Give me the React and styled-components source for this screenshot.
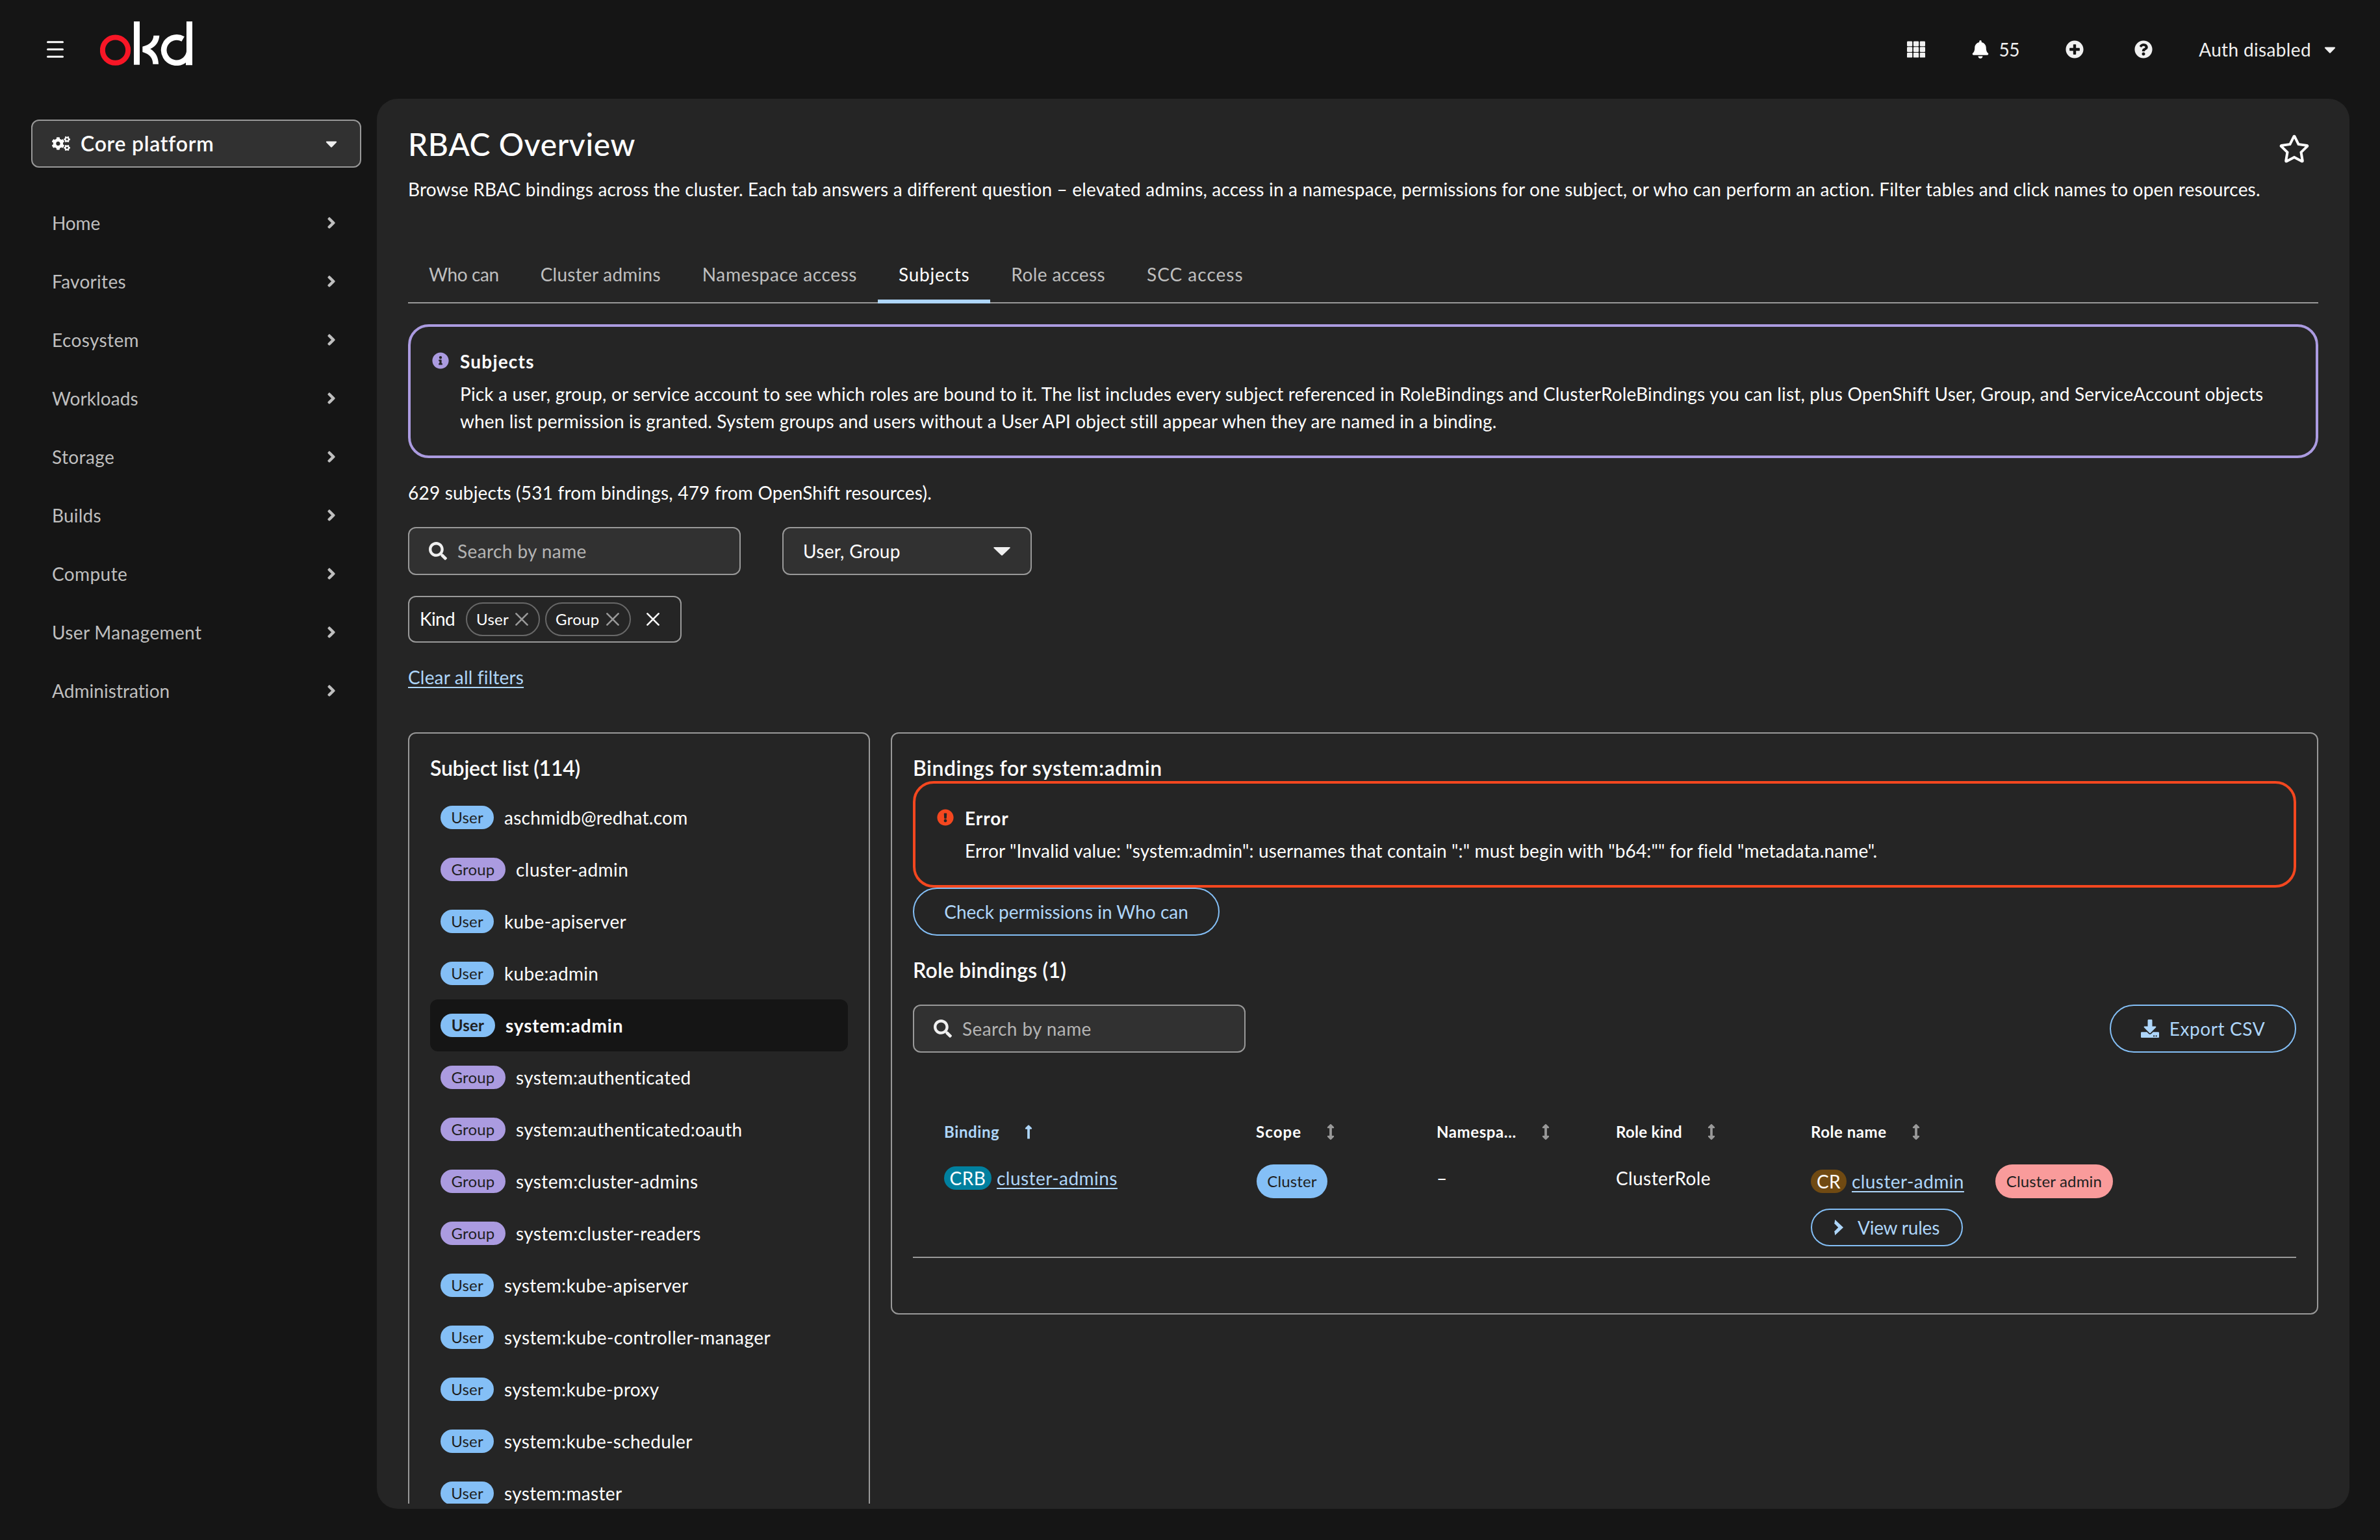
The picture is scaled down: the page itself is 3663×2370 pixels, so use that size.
import React from 'react'
import styled, { createGlobalStyle, css } from 'styled-components'
import {
  FaAngleRight,
  FaArrowsAltV,
  FaBell,
  FaCaretDown,
  FaCogs,
  FaDownload,
  FaExclamationCircle,
  FaInfoCircle,
  FaLongArrowAltUp,
  FaPlusCircle,
  FaQuestionCircle,
  FaRegStar,
  FaSearch,
} from 'react-icons/fa'

const GlobalStyle = createGlobalStyle`
* {
  box-sizing: border-box;
}
body {
  margin: 0;
  background: #151515;
  color: #ffffff;
  font-family: Lato, 'Liberation Sans', sans-serif;
  font-size: 28px;
  line-height: 42px;
}
svg {
  display: block;
  flex: none;
}
`

const spacing = css`
  letter-spacing: ${(p) => p.$ls || 0}px;
`

const Page = styled.div`
  width: 3663px;
  height: 2370px;
  overflow: hidden;
`
const Masthead = styled.header`
  height: 152px;
  padding: 0 63px 0 72px;
  display: flex;
  align-items: center;
`
const MenuButton = styled.div`
  width: 26px;
  margin-right: 56px;
`
const Logo = styled.div`
  width: 142px;
  height: 68px;
  margin-bottom: 19px;
`
const Tools = styled.div`
  margin-left: auto;
  display: flex;
  align-items: center;
  color: #f0f0f0;
`
const Tool = styled.div`
  display: flex;
  align-items: center;
  gap: 15px;
  margin-right: ${(p) => p.$after || 0}px;
  white-space: nowrap;
  ${spacing}
`
const Body = styled.div`
  display: flex;
`
const Sidebar = styled.nav`
  width: 580px;
  padding: 32px 24px 0 48px;
`
const Perspective = styled.div`
  height: 74px;
  border: 2px solid #999999;
  border-radius: 12px;
  background: #313131;
  padding: 0 30px;
  margin-bottom: 40px;
  display: flex;
  align-items: center;
  gap: 16px;
  font-size: 32px;
  font-weight: 600;
  letter-spacing: 0.7px;
  & > svg {
    font-size: 28px;
  }
  & > svg:last-child {
    margin-left: auto;
    color: #f0f0f0;
  }
`
const NavItem = styled.div`
  height: 90px;
  padding: 0 32px;
  display: flex;
  align-items: center;
  justify-content: space-between;
  color: #bfbfbf;
  ${spacing}
`
const Main = styled.main`
  width: 3036px;
  height: 2170px;
  padding-bottom: 8px;
  background: #252525;
  border-radius: 32px;
`
const Scroll = styled.div`
  height: 2162px;
  overflow: hidden;
  padding: 39px 48px 0;
`
const TitleRow = styled.div`
  display: flex;
  justify-content: space-between;
  height: 62px;
  padding-right: 13px;
  & > svg {
    font-size: 48px;
    margin-top: 14px;
  }
`
const Title = styled.h1`
  margin: 0;
  font-size: 48px;
  line-height: 62px;
  font-weight: 500;
  letter-spacing: 0.6px;
`
const Line = styled.div`
  height: 42px;
  margin-top: ${(p) => p.$top || 0}px;
  white-space: nowrap;
  ${spacing}
`
const Tabs = styled.div`
  display: flex;
  height: 87px;
  margin: 68px 0 32px;
  border-bottom: 2px solid #999999;
`
const Tab = styled.div`
  height: 87px;
  padding: 21px 32px 0;
  color: ${(p) => (p.$active ? '#ffffff' : '#bfbfbf')};
  border-bottom: 6px solid ${(p) => (p.$active ? '#aed6fa' : 'transparent')};
  white-space: nowrap;
  ${spacing}
`
const Alert = styled.div`
  border: 4px solid ${(p) => p.$color};
  border-radius: 32px;
  padding: 32px 33px;
  display: flex;
  gap: 17px;
  & > svg {
    font-size: 26px;
    margin-top: 7px;
    color: ${(p) => p.$color};
  }
`
const AlertTitle = styled.div`
  font-weight: 700;
  margin-bottom: 8px;
  ${spacing}
`
const Filters = styled.div`
  display: flex;
  gap: 64px;
  margin: 32px 0;
`
const SearchBox = styled.div`
  width: 512px;
  height: 74px;
  border: 2px solid #999999;
  border-radius: 12px;
  background: #313131;
  padding-left: 30px;
  display: flex;
  align-items: center;
  gap: 16px;
  color: #b4b4b4;
  letter-spacing: 0.4px;
  & > svg {
    color: #f0f0f0;
  }
`
const Select = styled.div`
  width: 384px;
  height: 74px;
  border: 2px solid #999999;
  border-radius: 12px;
  background: #313131;
  padding: 0 31px 0 30px;
  display: flex;
  align-items: center;
  justify-content: space-between;
  letter-spacing: 0.3px;
`
const ChipGroup = styled.div`
  width: 421px;
  height: 72px;
  border: 2px solid #999999;
  border-radius: 12px;
  padding: 0 32px 0 16px;
  display: flex;
  align-items: center;
  gap: 8px;
  & > svg:last-child {
    margin-left: auto;
  }
`
const ChipLabel = styled.div`
  width: 63px;
  margin-top: -3px;
  letter-spacing: -0.6px;
`
const Chip = styled.div`
  width: ${(p) => p.$width}px;
  height: 52px;
  border: 2px solid #686868;
  border-radius: 26px;
  padding: 0 16px 0 14px;
  display: flex;
  align-items: center;
  justify-content: space-between;
  font-size: 24px;
  letter-spacing: 0.3px;
`
const Link = styled.a`
  color: #aed6fa;
  text-decoration: underline;
  text-decoration-thickness: 2px;
  text-underline-offset: 4px;
  white-space: nowrap;
  ${spacing}
`
const Columns = styled.div`
  display: flex;
  align-items: flex-start;
  gap: 32px;
  margin-top: 64px;
`
const Panel = styled.section`
  width: ${(p) => p.$width}px;
  border: 2px solid #999999;
  border-radius: 12px;
  padding: 32px 32px ${(p) => p.$bottom}px;
`
const PanelTitle = styled.h2`
  margin: 0;
  font-size: 32px;
  line-height: 41px;
  font-weight: 600;
  white-space: nowrap;
  ${spacing}
`
const List = styled.div`
  margin-top: 16px;
  height: 1400px;
`
const Subject = styled.div`
  height: 80px;
  padding: 0 16px;
  display: flex;
  align-items: center;
  gap: 16px;
  border-radius: 12px;
  background: ${(p) => (p.$selected ? '#151515' : 'transparent')};
  font-weight: ${(p) => (p.$selected ? 700 : 400)};
  ${spacing}
`
const KindBadge = styled.span`
  height: 36px;
  width: ${(p) => p.$width}px;
  border-radius: 18px;
  background: ${(p) => (p.$group ? '#ab9be0' : '#84bff6')};
  color: #1f1f1f;
  font-size: 24px;
  line-height: 35px;
  text-align: center;
  letter-spacing: 0.2px;
`
const Button = styled.div`
  height: ${(p) => (p.$small ? 58 : 74)}px;
  width: ${(p) => p.$width}px;
  border: 2px solid #84bff6;
  border-radius: 37px;
  color: #aed6fa;
  display: flex;
  align-items: center;
  justify-content: center;
  gap: ${(p) => (p.$small ? 22 : 16)}px;
  white-space: nowrap;
  ${spacing}
`
const SectionTitle = styled(PanelTitle)`
  margin: 32px 0 33px;
`
const TableTools = styled.div`
  display: flex;
  justify-content: space-between;
  margin-bottom: 81px;
`
const TableRow = styled.div`
  display: grid;
  grid-template-columns: 480px 278px 276px 300px 1fr;
  padding-left: 48px;
`
const HeadRow = styled(TableRow)`
  height: 82px;
  align-items: center;
  font-size: 24px;
  font-weight: 700;
`
const DataRow = styled(TableRow)`
  padding-top: 9px;
  padding-bottom: 16px;
  border-bottom: 2px solid #999999;
`
const HeadCell = styled.div`
  display: flex;
  align-items: center;
  gap: 33px;
  color: ${(p) => (p.$sorted ? '#aed6fa' : '#ffffff')};
  ${spacing}
  & > svg {
    color: ${(p) => (p.$sorted ? '#aed6fa' : '#999999')};
  }
`
const Cell = styled.div`
  letter-spacing: 0.4px;
`
const Resource = styled.div`
  display: flex;
  align-items: center;
  height: ${(p) => p.$height}px;
`
const ResourceBadge = styled.span`
  width: ${(p) => p.$width}px;
  height: 36px;
  margin-right: 8px;
  border-radius: 18px;
  background: ${(p) => p.$color};
  line-height: 36px;
  text-align: center;
  ${spacing}
`
const Label = styled.span`
  display: inline-block;
  width: ${(p) => p.$width}px;
  height: 52px;
  margin-left: ${(p) => p.$left || 0}px;
  border-radius: 26px;
  background: ${(p) => p.$color};
  color: #1f1f1f;
  font-size: 24px;
  line-height: 51px;
  text-align: center;
  letter-spacing: 0.15px;
`
const Rules = styled.div`
  margin-top: 16px;
`

const navItems = [
  ['Home', -0.1],
  ['Favorites', 0.3],
  ['Ecosystem', 0.4],
  ['Workloads', 0.1],
  ['Storage', 0.4],
  ['Builds', 0.2],
  ['Compute', 0.4],
  ['User Management', 0.35],
  ['Administration', 0.05],
]

const tabs = [
  ['Who can', -0.4],
  ['Cluster admins', 0.25],
  ['Namespace access', 0.6],
  ['Subjects', 0.75],
  ['Role access', 0.4],
  ['SCC access', 1],
]

const subjects = [
  ['User', 'aschmidb@redhat.com', 0.25],
  ['Group', 'cluster-admin', 0.45],
  ['User', 'kube-apiserver', 0.35],
  ['User', 'kube:admin', 0.3],
  ['User', 'system:admin', 0.85],
  ['Group', 'system:authenticated', 0.35],
  ['Group', 'system:authenticated:oauth', 0.3],
  ['Group', 'system:cluster-admins', 0.38],
  ['Group', 'system:cluster-readers', 0.38],
  ['User', 'system:kube-apiserver', 0.35],
  ['User', 'system:kube-controller-manager', 0.42],
  ['User', 'system:kube-proxy', 0.35],
  ['User', 'system:kube-scheduler', 0.35],
  ['User', 'system:master', 0.35],
]

const headers = [
  ['Binding', 0.6],
  ['Scope', 1.1],
  ['Namespa...', 0.6],
  ['Role kind', 0.3],
  ['Role name', 0.55],
]

const HamburgerIcon = () => (
  <svg width="26" height="26" viewBox="0 0 26 26" stroke="#fff" strokeWidth="3" strokeLinecap="round">
    <path d="M1.5 1.7h23M1.5 13h23M1.5 24.3h23" />
  </svg>
)

const OkdLogo = () => (
  <svg width="142" height="68" viewBox="282 37 426 204" fill="none">
    <circle cx="352.5" cy="169.5" r="59" stroke="#f81626" strokeWidth="24" />
    <path fill="#fff" d="M438 37h27v200h-27z" />
    <path
      fill="#fff"
      d="M529 102h27c-2 27-14 48-42 62 26 16 37 39 38 70h-26c0-26-14-46-48-56v-25c33-8 50-26 51-51z"
    />
    <path stroke="#fff" strokeWidth="26" d="M665 118a59 59 0 1 0 29.5 50.5" />
    <path fill="#fff" d="M681 37h27v202h-30v-30l3-20z" />
  </svg>
)

const GridIcon = () => (
  <svg width="28" height="28" viewBox="0 0 28 28" fill="currentColor">
    {[1.6, 10.3, 19].map((y) =>
      [0, 9.9, 19.8].map((x) => <rect key={`${x}-${y}`} x={x} y={y} width="8.2" height="7.6" rx="1.2" />)
    )}
  </svg>
)

const CrossIcon = ({ color }) => (
  <svg width="20" height="20" viewBox="0 0 20 20" stroke={color} strokeWidth="2.6" strokeLinecap="round">
    <path d="M1.4 1.4l17.2 17.2M18.6 1.4L1.4 18.6" />
  </svg>
)

const SelectCaret = () => (
  <svg width="26" height="13" viewBox="0 0 26 13" fill="#f0f0f0">
    <path d="M1 0h24l1 1-12 11.5q-1 .8-2 0L0 1z" />
  </svg>
)

// heavier than the plain angle, with pointed ends
const RulesChevron = () => (
  <svg width="14" height="24" viewBox="0 0 14 24" fill="currentColor">
    <path d="M1.2 0L14 12 1.2 24l-.6-4.4L0 18.2 6.2 12 0 5.8l.6-1.4z" />
  </svg>
)

const App = () => {
  return (
    <Page>
      <GlobalStyle />
      <Masthead>
        <MenuButton><HamburgerIcon /></MenuButton>
        <Logo><OkdLogo /></Logo>
        <Tools>
          <Tool $after={71}><GridIcon /></Tool>
          <Tool $after={71} $ls={-0.4}><FaBell color="#fff" />55</Tool>
          <Tool $after={78}><FaPlusCircle /></Tool>
          <Tool $after={71}><FaQuestionCircle /></Tool>
          <Tool $ls={0.35}>Auth disabled<FaCaretDown /></Tool>
        </Tools>
      </Masthead>
      <Body>
        <Sidebar>
          <Perspective><FaCogs />Core platform<FaCaretDown /></Perspective>
          {navItems.map(([name, ls]) => (
            <NavItem key={name} $ls={ls}>{name}<FaAngleRight /></NavItem>
          ))}
        </Sidebar>
        <Main>
          <Scroll>
            <TitleRow>
              <Title>RBAC Overview</Title>
              <FaRegStar />
            </TitleRow>
            <Line $top={17} $ls={0.18}>
              Browse RBAC bindings across the cluster. Each tab answers a different question – elevated admins, access in a namespace, permissions for one subject, or who can perform an action. Filter tables and click names to open resources.
            </Line>
            <Tabs>
              {tabs.map(([name, ls]) => (
                <Tab key={name} $ls={ls} $active={name === 'Subjects'}>{name}</Tab>
              ))}
            </Tabs>
            <Alert $color="#ab9be0">
              <FaInfoCircle />
              <div>
                <AlertTitle $ls={1.2}>Subjects</AlertTitle>
                <Line $ls={0.18}>
                  Pick a user, group, or service account to see which roles are bound to it. The list includes every subject referenced in RoleBindings and ClusterRoleBindings you can list, plus OpenShift User, Group, and ServiceAccount objects
                </Line>
                <Line $ls={0.1}>
                  when list permission is granted. System groups and users without a User API object still appear when they are named in a binding.
                </Line>
              </div>
            </Alert>
            <Line $top={32} $ls={0.2}>629 subjects (531 from bindings, 479 from OpenShift resources).</Line>
            <Filters>
              <SearchBox><FaSearch />Search by name</SearchBox>
              <Select>User, Group<SelectCaret /></Select>
            </Filters>
            <ChipGroup>
              <ChipLabel>Kind</ChipLabel>
              <Chip $width={114}>User<CrossIcon color="#999" /></Chip>
              <Chip $width={132}>Group<CrossIcon color="#999" /></Chip>
              <CrossIcon color="#fff" />
            </ChipGroup>
            <Line $top={32}><Link $ls={0.17}>Clear all filters</Link></Line>
            <Columns>
              <Panel $width={711} $bottom={32}>
                <PanelTitle $ls={-0.25}>Subject list (114)</PanelTitle>
                <List>
                  {subjects.map(([kind, name, ls]) => {
                    const selected = name === 'system:admin'
                    return (
                      <Subject key={name} $selected={selected} $ls={ls}>
                        <KindBadge $group={kind === 'Group'} $width={kind === 'Group' ? 100 : selected ? 84 : 82}>{kind}</KindBadge>
                        {name}
                      </Subject>
                    )
                  })}
                </List>
              </Panel>
              <Panel $width={2197} $bottom={85}>
                <PanelTitle $ls={0.5}>Bindings for system:admin</PanelTitle>
                <Alert $color="#f4471f">
                  <FaExclamationCircle />
                  <div>
                    <AlertTitle $ls={1}>Error</AlertTitle>
                    <Line $ls={0.14}>
                      Error "Invalid value: "system:admin": usernames that contain ":" must begin with "b64:"" for field "metadata.name".
                    </Line>
                  </div>
                </Alert>
                <Button $width={472}>Check permissions in Who can</Button>
                <SectionTitle $ls={0.2}>Role bindings (1)</SectionTitle>
                <TableTools>
                  <SearchBox><FaSearch />Search by name</SearchBox>
                  <Button $width={287} $ls={0.6}><FaDownload />Export CSV</Button>
                </TableTools>
                <HeadRow>
                  {headers.map(([name, ls], i) => (
                    <HeadCell key={name} $ls={ls} $sorted={i === 0}>
                      {name}
                      {i === 0 ? <FaLongArrowAltUp /> : <FaArrowsAltV />}
                    </HeadCell>
                  ))}
                </HeadRow>
                <DataRow>
                  <Cell>
                    <Resource $height={42}>
                      <ResourceBadge $width={73} $color="#00809f" $ls={0.6}>CRB</ResourceBadge>
                      <Link $ls={0.45}>cluster-admins</Link>
                    </Resource>
                  </Cell>
                  <Cell><Label $width={109} $left={1} $color="#84bff6">Cluster</Label></Cell>
                  <Cell>–</Cell>
                  <Cell>ClusterRole</Cell>
                  <Cell>
                    <Resource $height={52}>
                      <ResourceBadge $width={55} $color="#704a12" $ls={0.3}>CR</ResourceBadge>
                      <Link $ls={0.42}>cluster-admin</Link>
                      <Label $width={181} $left={48} $color="#f99b9b">Cluster admin</Label>
                    </Resource>
                    <Rules>
                      <Button $small $width={234} $ls={-0.2}><RulesChevron />View rules</Button>
                    </Rules>
                  </Cell>
                </DataRow>
              </Panel>
            </Columns>
          </Scroll>
        </Main>
      </Body>
    </Page>
  )
}

export default App
